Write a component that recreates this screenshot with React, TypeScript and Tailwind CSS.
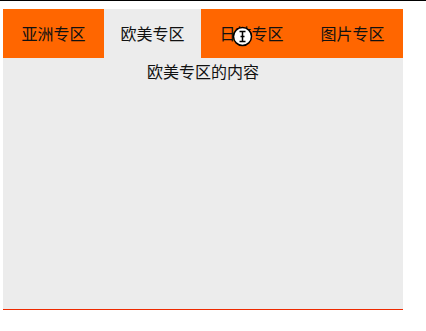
import React, { useState } from "react";

const tabs = [
  { title: "亚洲专区", content: "亚洲专区的内容", width: "w-[101px]" },
  { title: "欧美专区", content: "欧美专区的内容", width: "w-[97px]" },
  { title: "日韩专区", content: "日韩专区的内容", width: "w-[101px]" },
  { title: "图片专区", content: "图片专区的内容", width: "w-[101px]" },
];

const CursorMark = () => (
  <svg
    className="pointer-events-none absolute left-[232px] top-[25px]"
    width="21"
    height="21"
    viewBox="0 0 21 21"
  >
    <circle cx="10.5" cy="10.5" r="9" fill="white" stroke="black" strokeWidth="1.5" />
    <path
      d="M7.5 5.5h6M7.5 15.5h6M10.5 5.5v10M8.5 10.5h4"
      stroke="black"
      strokeWidth="1.5"
      fill="none"
    />
  </svg>
);

export default function App() {
  const [active, setActive] = useState(1);

  return (
    <div
      className="relative min-h-[331px] border-t border-black bg-white pl-[3px] pt-2 text-[#111]"
      style={{ fontFamily: '"Noto Sans CJK SC", "Noto Sans", sans-serif' }}
    >
      <div className="w-[400px]">
        <ul className="flex h-[49px] bg-[#ff6600]">
          {tabs.map((tab, index) => (
            <li
              key={index}
              onClick={() => setActive(index)}
              className={`${tab.width} flex cursor-pointer items-center justify-center pb-[1px] text-base ${
                index === active ? "bg-[#ececec]" : "bg-[#ff6600]"
              }`}
            >
              {tab.title}
            </li>
          ))}
        </ul>
        <div className="h-[252px] border-b border-[#ee2a00] bg-[#ececec] pt-[1px] text-center text-base leading-6">
          {tabs[active].content}
        </div>
      </div>
      <CursorMark />
    </div>
  );
}
